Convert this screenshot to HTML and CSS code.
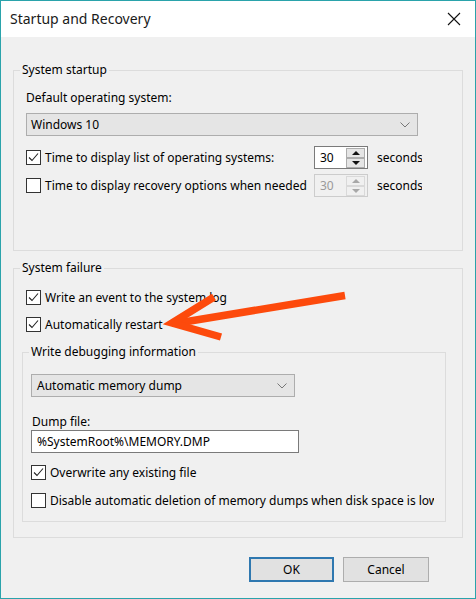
FILE: index.html
```html
<!DOCTYPE html>
<html>
<head>
<meta charset="utf-8">
<link rel="stylesheet" href="styles.css">
</head>
<body>
<div class="window">
  <div class="titlebar">
    <span class="title">Startup and Recovery</span>
    <svg class="close" width="14" height="14" viewBox="0 0 14 14"><path d="M1 1 L13 13 M13 1 L1 13" stroke="#111" stroke-width="1.1" fill="none"/></svg>
  </div>
  <div class="content">
    <fieldset class="group g1">
      <legend>System startup</legend>
      <div class="label default-label">Default operating system:</div>
      <div class="combo combo-os"><span>Windows 10</span><svg class="chev" width="10" height="6" viewBox="0 0 10 6"><path d="M0.5 0.5 L5 5 L9.5 0.5" stroke="#777" fill="none"/></svg></div>
      <div class="row spin-row r1">
        <span class="check"><svg width="13" height="13" viewBox="0 0 13 13"><path d="M2 6.5 L5 9.5 L11 2.5" stroke="#222" stroke-width="1.1" fill="none"/></svg></span>
        <span class="cb-label spin-label">Time to display list of operating systems:</span>
        <span class="spin"><span class="val">30</span><span class="spinbtns"><span class="sb"><i class="tri up"></i></span><span class="sb"><i class="tri down"></i></span></span></span>
        <span class="sec">seconds</span>
      </div>
      <div class="row spin-row r2">
        <span class="check"></span>
        <span class="cb-label spin-label">Time to display recovery options when needed</span>
        <span class="spin disabled"><span class="val">30</span><span class="spinbtns"><span class="sb"><i class="tri up"></i></span><span class="sb"><i class="tri down"></i></span></span></span>
        <span class="sec">seconds</span>
      </div>
    </fieldset>

    <fieldset class="group g2">
      <legend>System failure</legend>
      <div class="row cb-row f1">
        <span class="check"><svg width="13" height="13" viewBox="0 0 13 13"><path d="M2 6.5 L5 9.5 L11 2.5" stroke="#222" stroke-width="1.1" fill="none"/></svg></span>
        <span class="cb-label">Write an event to the system log</span>
      </div>
      <div class="row cb-row f2">
        <span class="check"><svg width="13" height="13" viewBox="0 0 13 13"><path d="M2 6.5 L5 9.5 L11 2.5" stroke="#222" stroke-width="1.1" fill="none"/></svg></span>
        <span class="cb-label">Automatically restart</span>
      </div>
      <fieldset class="inner">
        <legend>Write debugging information</legend>
        <div class="combo combo-dump"><span>Automatic memory dump</span><svg class="chev" width="10" height="6" viewBox="0 0 10 6"><path d="M0.5 0.5 L5 5 L9.5 0.5" stroke="#777" fill="none"/></svg></div>
        <div class="label dump-label">Dump file:</div>
        <div class="textbox">%SystemRoot%\MEMORY.DMP</div>
        <div class="row cb-row d1">
          <span class="check"><svg width="13" height="13" viewBox="0 0 13 13"><path d="M2 6.5 L5 9.5 L11 2.5" stroke="#222" stroke-width="1.1" fill="none"/></svg></span>
          <span class="cb-label">Overwrite any existing file</span>
        </div>
        <div class="row cb-row d2">
          <span class="check"></span>
          <span class="cb-label">Disable automatic deletion of memory dumps when disk space is low</span>
        </div>
      </fieldset>
    </fieldset>

    <div class="buttons">
      <button class="btn ok">OK</button>
      <button class="btn">Cancel</button>
    </div>
  </div>
  <svg class="arrow" width="476" height="599" viewBox="0 0 476 599">
    <path d="M345 295.5 L178 323" stroke="#fd4a0c" stroke-width="7.5" fill="none"/>
    <path d="M214 297 L172 323 L221 337" stroke="#fd4a0c" stroke-width="7.5" fill="none" stroke-linejoin="miter" stroke-miterlimit="10"/>
  </svg>
</div>
</body>
</html>
```
FILE: styles.css
```css
* { box-sizing: border-box; }
html, body { margin: 0; padding: 0; }
body {
  font-family: "Noto Sans", "Open Sans", sans-serif;
  font-size: 12px;
  color: #000;
  background: #f0f0f0;
}
.window {
  position: relative;
  width: 476px;
  height: 599px;
  border: 1px solid #2aa3ab;
  background: #f0f0f0;
  overflow: hidden;
}
.titlebar {
  height: 36px;
  background: #fff;
  display: flex;
  align-items: center;
  justify-content: space-between;
  padding: 0 14px 0 9px;
}
.title {
  font-size: 14px;
  color: #1a1a1a;
  margin-top: -1px;
}
.close { display: block; }
.content {
  padding: 24px 0 0 12px;
}
fieldset {
  margin: 0;
  border: 1px solid #dcdcdc;
  min-width: 0;
}
legend {
  padding: 0 2px;
  line-height: 18px;
  margin-left: -6px;
}
.group {
  width: 450px;
  padding: 0 12px 0 12px;
}
.g1 { padding-bottom: 53px; }
.g2 { margin-top: 8px; padding-bottom: 15px; }
.label { line-height: 16px; white-space: nowrap; }
.default-label { margin-top: 11px; }
.combo {
  height: 23px;
  border: 1px solid #adadad;
  background: #e5e5e5;
  display: flex;
  align-items: center;
  justify-content: space-between;
  padding: 0 7px 0 4px;
}
.combo-os { margin-top: 7px; width: 392px; }
.row {
  display: flex;
  align-items: center;
  white-space: nowrap;
}
.check {
  flex: 0 0 15px;
  width: 15px;
  height: 15px;
  border: 1px solid #333;
  background: #fff;
  display: flex;
  align-items: center;
  justify-content: center;
}
.check svg { display: block; }
.cb-label { margin-left: 4px; }
.spin-row { height: 23px; }
.r1 { margin-top: 10px; }
.r2 { margin-top: 5px; }
.spin-label { flex: 0 0 269px; width: 269px; }
.spin {
  flex: 0 0 54px;
  height: 23px;
  border: 1px solid #7a7a7a;
  background: #fff;
  display: flex;
  align-items: center;
  justify-content: space-between;
  padding: 0 2px 0 5px;
}
.spinbtns {
  display: flex;
  flex-direction: column;
  gap: 0;
}
.sb {
  width: 19px;
  height: 10px;
  border: 1px solid #adadad;
  background: #e5e5e5;
  display: flex;
  align-items: center;
  justify-content: center;
}
.tri {
  width: 0; height: 0;
  border-left: 4px solid transparent;
  border-right: 4px solid transparent;
}
.tri.up { border-bottom: 4px solid #111; }
.tri.down { border-top: 4px solid #111; }
.spin.disabled { border-color: #cccccc; background: #f0f0f0; color: #9a9a9a; }
.spin.disabled .sb { border-color: #d9d9d9; background: #f0f0f0; }
.spin.disabled .tri.up { border-bottom-color: #a8a8a8; }
.spin.disabled .tri.down { border-top-color: #a8a8a8; }
.sec {
  margin-left: 9px;
  width: 45px;
  overflow: hidden;
}
.cb-row { height: 20px; }
.f1 { margin-top: 10px; }
.f2 { margin-top: 7px; }
.inner {
  margin-top: 9px;
  margin-left: -4px;
  width: 424px;
  padding: 0 11px 11px 8px;
}
.inner legend { margin-left: -2px; }
.combo-dump { margin-top: 13px; width: 264px; padding-left: 5px; }
.dump-label { margin-top: 17px; padding-left: 1px; }
.textbox {
  width: 268px;
  height: 23px;
  border: 1px solid #7a7a7a;
  background: #fff;
  line-height: 21px;
  padding-left: 5px;
}
.d1 { margin-top: 9px; }
.d2 { margin-top: 8px; overflow: hidden; }
.buttons {
  display: flex;
  gap: 9px;
  margin-top: 19px;
  padding-left: 236px;
}
.btn {
  font-family: inherit;
  font-size: 12px;
  color: #000;
  width: 86px;
  height: 25px;
  border: 1px solid #adadad;
  background: #e1e1e1;
  padding: 0;
}
.btn.ok { width: 85px; border: 2px solid #2f78b0; }
.arrow {
  position: absolute;
  left: -1px;
  top: -1px;
  pointer-events: none;
}
```
